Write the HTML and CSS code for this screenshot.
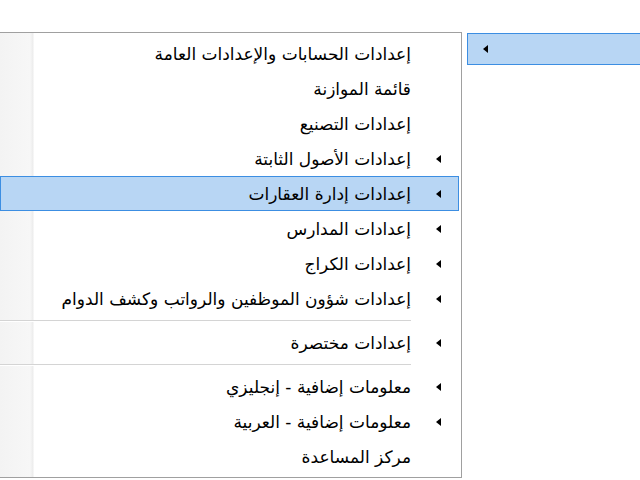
FILE: index.html
```html
<!DOCTYPE html>
<html lang="ar">
<head>
    <meta charset="UTF-8">
    <title>Settings Menu</title>
    <link rel="stylesheet" href="styles.css">
</head>
<body>
    <div class="screen">
        <div class="menu" dir="rtl">
            <div class="item"><span class="arrow-cell"></span><span class="label">إعدادات الحسابات والإعدادات العامة</span></div>
            <div class="item"><span class="arrow-cell"></span><span class="label">قائمة الموازنة</span></div>
            <div class="item"><span class="arrow-cell"></span><span class="label">إعدادات التصنيع</span></div>
            <div class="item"><span class="arrow-cell"><i class="arrow"></i></span><span class="label">إعدادات الأصول الثابتة</span></div>
            <div class="item active"><span class="arrow-cell"><i class="arrow"></i></span><span class="label">إعدادات إدارة العقارات</span></div>
            <div class="item"><span class="arrow-cell"><i class="arrow"></i></span><span class="label">إعدادات المدارس</span></div>
            <div class="item"><span class="arrow-cell"><i class="arrow"></i></span><span class="label">إعدادات الكراج</span></div>
            <div class="item"><span class="arrow-cell"><i class="arrow"></i></span><span class="label">إعدادات شؤون الموظفين والرواتب وكشف الدوام</span></div>
            <div class="separator"></div>
            <div class="item"><span class="arrow-cell"><i class="arrow"></i></span><span class="label">إعدادات مختصرة</span></div>
            <div class="separator"></div>
            <div class="item"><span class="arrow-cell"><i class="arrow"></i></span><span class="label">معلومات إضافية - إنجليزي</span></div>
            <div class="item"><span class="arrow-cell"><i class="arrow"></i></span><span class="label">معلومات إضافية - العربية</span></div>
            <div class="item"><span class="arrow-cell"></span><span class="label">مركز المساعدة</span></div>
        </div>
        <div class="parent-item">
            <i class="arrow"></i>
        </div>
    </div>
</body>
</html>
```

FILE: styles.css
```css
body, html {
    margin: 0;
    padding: 0;
    background-color: #FFFFFF;
}
.screen {
    display: flex;
    align-items: flex-start;
    padding-top: 32px;
    width: 640px;
    overflow: hidden;
}
.menu {
    width: 459px;
    flex-shrink: 0;
    border: 1px solid #a0a0a0;
    border-left: none;
    padding: 3px 2px 3px 0;
    background: linear-gradient(to right, #f3f3f3 0, #f7f7f7 30px, #ececec 33px, #ffffff 34px);
    font-family: 'DejaVu Sans', sans-serif;
    font-size: 17px;
    color: #000000;
}
.item {
    display: flex;
    align-items: center;
    height: 35px;
    box-sizing: border-box;
    border: 1px solid transparent;
}
.item.active {
    background-color: #b8d6f4;
    border-color: #3c8ee2;
}
.arrow-cell {
    display: flex;
    align-items: center;
    width: 47px;
    padding-right: 17px; /* arrow sits in the right gutter */
    box-sizing: border-box;
    flex-shrink: 0;
}
.arrow {
    display: block;
    width: 0;
    height: 0;
    border-top: 4px solid transparent;
    border-bottom: 4px solid transparent;
    border-right: 5px solid #000000;
}
.label {
    white-space: nowrap;
    line-height: 1;
    padding-top: 2px;
}
.separator {
    height: 9px;
    display: flex;
    align-items: center;
    padding-right: 48px;
}
.separator::after {
    content: '';
    display: block;
    width: 100%;
    height: 1px;
    background-color: #d4d4d4;
    box-shadow: 0 1px 0 #ffffff;
}
.parent-item {
    display: flex;
    align-items: center;
    margin-left: 5px;
    margin-top: 1px;
    height: 32px;
    flex-grow: 1;
    padding-left: 15px;
    box-sizing: border-box;
    background-color: #b8d6f4;
    border: 1px solid #3c8ee2;
    border-right: none;
}
```
